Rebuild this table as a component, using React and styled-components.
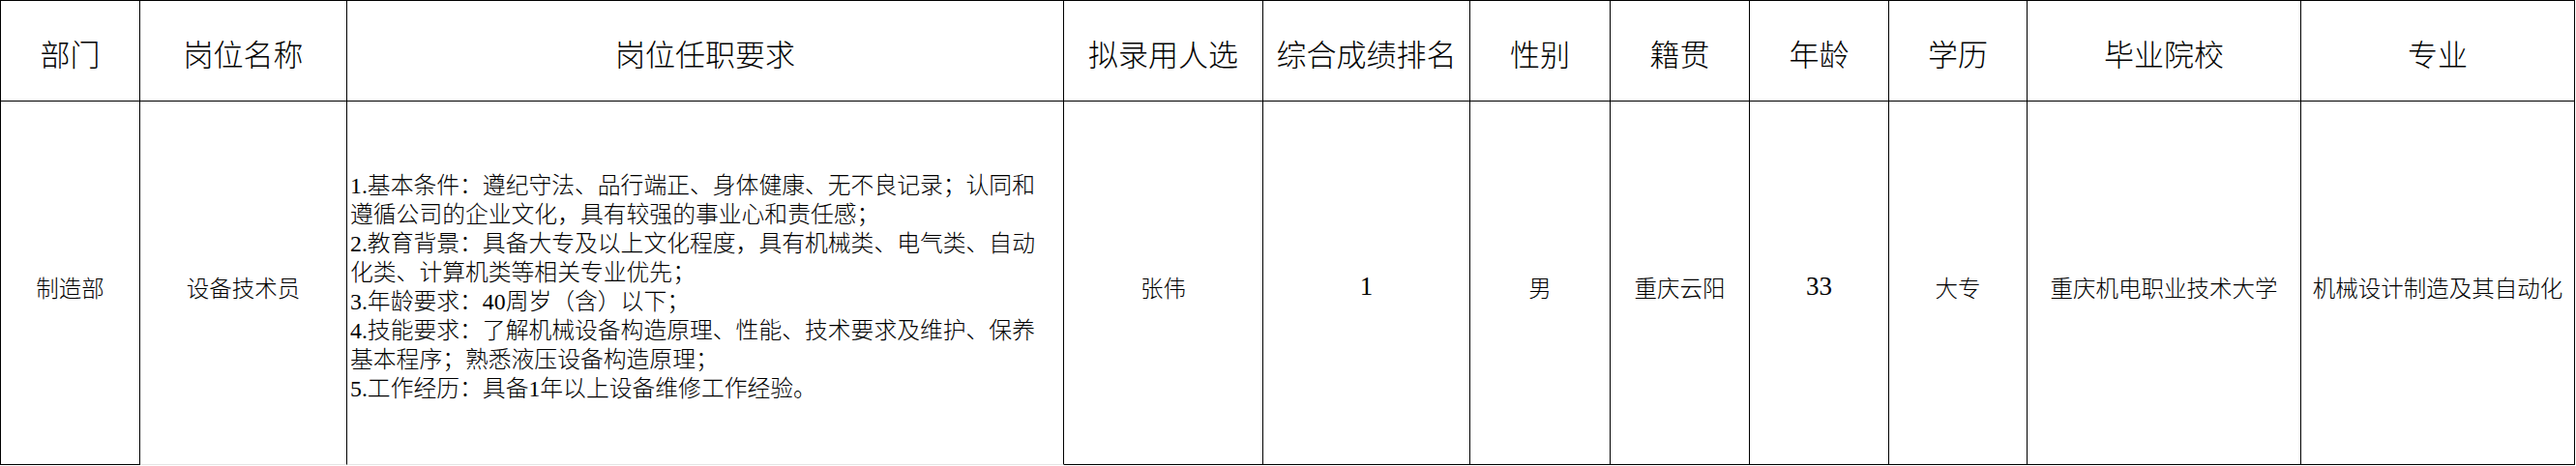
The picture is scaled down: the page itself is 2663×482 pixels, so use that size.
import React from 'react';
import styled, { createGlobalStyle } from 'styled-components';

const GlobalStyle = createGlobalStyle`
  html, body {
    margin: 0;
    padding: 0;
    background: #ffffff;
  }
  body {
    font-family: 'Liberation Serif', 'Noto Sans CJK SC', serif;
    font-weight: 300;
    color: #000000;
  }
`;

// widths between the vertical rules, right rule included
const columns = [144, 214, 741, 206, 214, 145, 144, 144, 143, 283, 283];

const Sheet = styled.div`
  display: grid;
  grid-template-columns: ${ columns.map(w => `${w}px`).join(' ') };
  grid-template-rows: 104px 376px;
  width: max-content;
  border-left: 1px solid #000;
  border-top: 1px solid #000;
`;

const HeadCell = styled.div`
  display: flex;
  align-items: center;
  justify-content: center;
  border-right: 1px solid #000;
  border-bottom: 1px solid #000;
  font-size: 31px;
  padding-top: 3px;
  box-sizing: border-box;
  white-space: nowrap;
`;

const Cell = styled.div`
  display: flex;
  align-items: center;
  justify-content: ${ props => props.left ? 'flex-start' : 'center' };
  padding-left: ${ props => props.left ? '3px' : '0' };
  border-right: 1px solid #000;
  border-bottom: 1px solid ${ props => props.faint ? '#e4e4e4' : '#000' };
  font-size: ${ props => props.num ? '27px' : '23.5px' };
  padding-top: 8px;
  box-sizing: border-box;
  white-space: nowrap;
`;

const Requirements = styled.div`
  font-size: 23.8px;
  line-height: 30px;
`;

const Line = styled.div`
  white-space: nowrap;
`;

const headers = [
  '部门', '岗位名称', '岗位任职要求', '拟录用人选', '综合成绩排名',
  '性别', '籍贯', '年龄', '学历', '毕业院校', '专业'
];

const requirementLines = [
  '1.基本条件：遵纪守法、品行端正、身体健康、无不良记录；认同和',
  '遵循公司的企业文化，具有较强的事业心和责任感；',
  '2.教育背景：具备大专及以上文化程度，具有机械类、电气类、自动',
  '化类、计算机类等相关专业优先；',
  '3.年龄要求：40周岁（含）以下；',
  '4.技能要求：了解机械设备构造原理、性能、技术要求及维护、保养',
  '基本程序；熟悉液压设备构造原理；',
  '5.工作经历：具备1年以上设备维修工作经验。'
];

const row = ['张伟', '1', '男', '重庆云阳', '33', '大专', '重庆机电职业技术大学', '机械设计制造及其自动化'];

export default function App() {
  return (
    <>
      <GlobalStyle />
      <Sheet>
        { headers.map(h => <HeadCell key={ h }>{ h }</HeadCell>) }

        <Cell>制造部</Cell>
        <Cell faint>设备技术员</Cell>
        <Cell faint left>
          <Requirements>
            { requirementLines.map((l, i) => <Line key={ i }>{ l }</Line>) }
          </Requirements>
        </Cell>
        { row.map((v, i) => <Cell key={ i } num={ /^\d+$/.test(v) }>{ v }</Cell>) }
      </Sheet>
    </>
  );
}
